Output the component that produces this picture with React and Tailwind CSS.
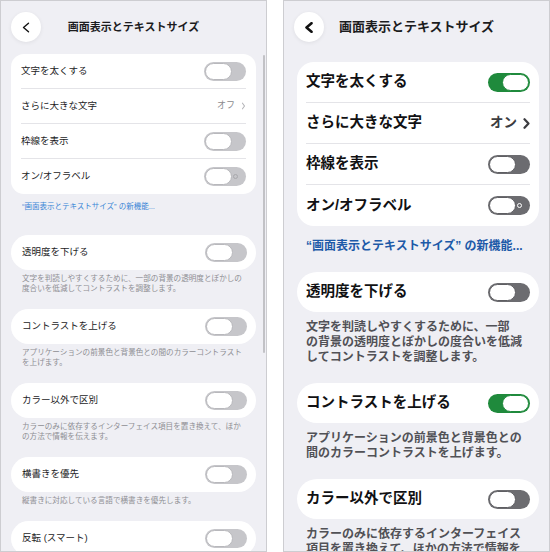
import React from 'react';

const FONT = "font-[family-name:Liberation_Sans,Noto_Sans_CJK_JP,sans-serif]";

const sizes = {
	small: {
		frame: 'bg-[#efeff4]',
		header: 'px-[10px] pt-[11px] pb-[12px]',
		title: 'text-[11px] font-semibold',
		chevStroke: 1.4,
		body: 'px-[10px]',
		card: 'rounded-[13px]',
		rowWrap: 'px-[10px]',
		row: 'h-[35px]',
		label: 'text-[9.5px] text-[#1c1c1e]',
		value: 'text-[9px] text-[#8a8a8e]',
		valueChev: { w: 5, h: 8, s: 1.1, c: '#b4b4b8' },
		link: 'mt-[8px] pl-[11px] text-[7.5px] leading-[10px] text-[#3a86d6]',
		pillFirst: 'mt-[23px]',
		pill: 'h-[35px] pl-[11px] pr-[9px]',
		desc: 'mt-[4px] mb-[15px] px-[11px] text-[7.6px] leading-[10px] text-[#8e8e93]',
		trackOff: 'bg-[#c6c6ca]',
		knobOff: 'border-[#b8b8bc]',
		dot: 'border-[#a8a8ac]',
	},
	big: {
		frame: 'bg-[#efeff4]',
		header: 'px-[10px] pt-[11px] pb-[20px]',
		title: 'text-[13px] font-bold',
		chevStroke: 2.6,
		body: 'pl-[13px] pr-[10px]',
		card: 'rounded-[17px]',
		rowWrap: 'px-[9px]',
		row: 'h-[41px]',
		label: 'text-[14.5px] font-bold text-[#111113]',
		value: 'text-[13.5px] font-bold text-[#3c3c40]',
		valueChev: { w: 7, h: 11, s: 2.2, c: '#3c3c40' },
		link: 'mt-[13px] pl-[9px] text-[12px] leading-[15px] font-bold text-[#1d5aa8]',
		pillFirst: 'mt-[18px]',
		pill: 'h-[40px] pl-[9px] pr-[9px]',
		desc: 'mt-[8px] mb-[18px] pl-[9px] text-[12px] leading-[15px] font-semibold text-[#515156]',
		trackOff: 'bg-[#6c6c70]',
		knobOff: 'border-[#5e5e62]',
		dot: 'border-white',
	},
};

const screens = {
	small: {
		main: [
			{ label: '文字を太くする', on: false },
			{ label: 'さらに大きな文字', value: 'オフ' },
			{ label: '枠線を表示', on: false },
			{ label: 'オン/オフラベル', on: false, dot: true },
		],
		pills: [
			{ label: '透明度を下げる', on: false, desc: ['文字を判読しやすくするために、一部の背景の透明度とぼかしの', '度合いを低減してコントラストを調整します。'] },
			{ label: 'コントラストを上げる', on: false, desc: ['アプリケーションの前景色と背景色との間のカラーコントラスト', 'を上げます。'] },
			{ label: 'カラー以外で区別', on: false, desc: ['カラーのみに依存するインターフェイス項目を置き換えて、ほか', 'の方法で情報を伝えます。'] },
			{ label: '横書きを優先', on: false, desc: ['縦書きに対応している言語で横書きを優先します。'] },
			{ label: '反転 (スマート)', on: false, desc: [] },
		],
	},
	big: {
		main: [
			{ label: '文字を太くする', on: true },
			{ label: 'さらに大きな文字', value: 'オン' },
			{ label: '枠線を表示', on: false },
			{ label: 'オン/オフラベル', on: false, dot: true },
		],
		pills: [
			{ label: '透明度を下げる', on: false, desc: ['文字を判読しやすくするために、一部', 'の背景の透明度とぼかしの度合いを低減', 'してコントラストを調整します。'] },
			{ label: 'コントラストを上げる', on: true, desc: ['アプリケーションの前景色と背景色との', '間のカラーコントラストを上げます。'] },
			{ label: 'カラー以外で区別', on: false, desc: ['カラーのみに依存するインターフェイス', '項目を置き換えて、ほかの方法で情報を', '伝えます。'] },
		],
	},
};

function Toggle({ on, dot, s }) {
	return (
		<div className={`relative flex items-center shrink-0 w-[42px] h-[19px] rounded-full px-[1px] ${on ? 'justify-end bg-[#1f8a3c]' : `justify-start ${s.trackOff}`}`}>
			{dot && !on && (
				<span className={`absolute right-[8px] top-[7px] w-[5px] h-[5px] rounded-full border ${s.dot}`} />
			)}
			<div className={`w-[27px] h-[17px] rounded-full bg-white border ${on ? 'border-[#1f8a3c]' : s.knobOff}`} />
		</div>
	);
}

function Chevron({ w, h, s, c, dir = 'right' }) {
	const d = dir === 'right' ? `M1.5 1.2 L${w - 1.5} ${h / 2} L1.5 ${h - 1.2}` : `M${w - 1.5} 1.2 L1.5 ${h / 2} L${w - 1.5} ${h - 1.2}`;
	return (
		<svg width={w} height={h} viewBox={`0 0 ${w} ${h}`} fill="none">
			<path d={d} stroke={c} strokeWidth={s} strokeLinecap="round" strokeLinejoin="round" />
		</svg>
	);
}

function Screen({ kind }) {
	const s = sizes[kind];
	const data = screens[kind];
	return (
		<div className={`relative w-[267px] h-[552px] overflow-hidden border border-[#cdcdd1] ${s.frame}`}>
			<div className={`flex items-center ${s.header}`}>
				<div className="w-[30px] h-[30px] rounded-full bg-white flex items-center justify-center shadow-[0_1px_4px_rgba(0,0,0,0.07)]">
					<Chevron dir="left" w={8} h={11} s={s.chevStroke} c="#111" />
				</div>
				<div className={`flex-1 text-center text-[#1c1c1e] whitespace-nowrap ${s.title}`}>画面表示とテキストサイズ</div>
				<div className="w-[30px]" />
			</div>

			<div className={s.body}>
				<div className={`bg-white ${s.card}`}>
					{data.main.map((r, i) => (
						<div key={r.label} className={s.rowWrap}>
							<div className={`flex items-center justify-between ${s.row} ${i < data.main.length - 1 ? 'border-b border-[#e4e4e8]' : ''}`}>
								<span className={`whitespace-nowrap ${s.label}`}>{r.label}</span>
								{r.value ? (
									<span className={`flex items-center gap-[6px] ${s.value}`}>
										{r.value}
										<Chevron {...s.valueChev} />
									</span>
								) : (
									<Toggle on={r.on} dot={r.dot} s={s} />
								)}
							</div>
						</div>
					))}
				</div>

				<div className={`whitespace-nowrap ${s.link}`}>“画面表示とテキストサイズ” の新機能...</div>

				<div className={s.pillFirst}>
					{data.pills.map(p => (
						<div key={p.label}>
							<div className={`bg-white rounded-full flex items-center justify-between ${s.pill}`}>
								<span className={`whitespace-nowrap ${s.label}`}>{p.label}</span>
								<Toggle on={p.on} s={s} />
							</div>
							{p.desc.length > 0 && (
								<div className={s.desc}>
									{p.desc.map(line => (
										<div key={line} className="whitespace-nowrap">{line}</div>
									))}
								</div>
							)}
						</div>
					))}
				</div>
			</div>

			{kind === 'small' && (
				<div className="absolute right-[1px] top-[54px] w-[2.5px] h-[298px] rounded-full bg-[#c2c2c6]" />
			)}
		</div>
	);
}

export default function App() {
	return (
		<div className={`w-[550px] h-[552px] bg-white flex justify-between ${FONT}`}>
			<Screen kind="small" />
			<Screen kind="big" />
		</div>
	);
}
